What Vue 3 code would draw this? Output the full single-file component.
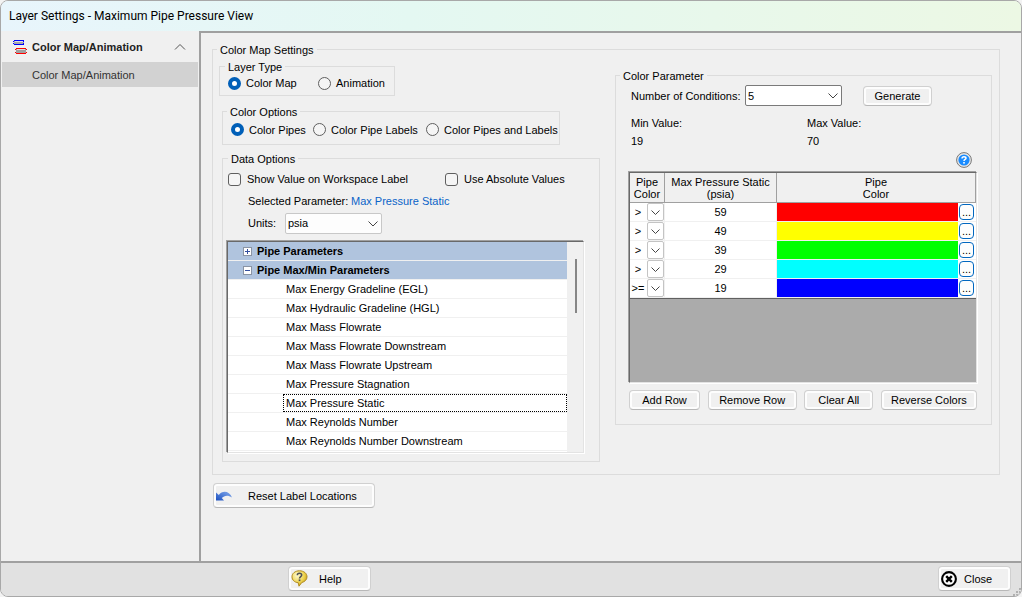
<script setup>
import { ref } from 'vue'

const layerType = ref('map')
const colorOption = ref('pipes')
const showValue = ref(false)
const absolute = ref(false)
const units = ref('psia')
const conditions = ref('5')
const selected = ref('Max Pressure Static')

const colorOptions = [
  { id: 'pipes', label: 'Color Pipes' },
  { id: 'labels', label: 'Color Pipe Labels' },
  { id: 'both', label: 'Color Pipes and Labels' }
]

const parameters = [
  'Max Energy Gradeline (EGL)',
  'Max Hydraulic Gradeline (HGL)',
  'Max Mass Flowrate',
  'Max Mass Flowrate Downstream',
  'Max Mass Flowrate Upstream',
  'Max Pressure Stagnation',
  'Max Pressure Static',
  'Max Reynolds Number',
  'Max Reynolds Number Downstream'
]

const rows = ref([
  { op: '>', value: 59, color: 'red' },
  { op: '>', value: 49, color: 'yellow' },
  { op: '>', value: 39, color: 'lime' },
  { op: '>', value: 29, color: 'cyan' },
  { op: '>=', value: 19, color: 'blue' }
])
</script>

<template>
  <div class="window">
    <header class="titlebar">Layer Settings - Maximum Pipe Pressure View</header>

    <div class="body">
      <nav class="sidebar">
        <button class="nav-head" type="button">
          <svg class="nav-icon" width="14" height="14" viewBox="0 0 14 14" shape-rendering="crispEdges">
            <rect x="1" y="1" width="10" height="3" fill="#a8a8a8" />
            <path d="M2 1.500h8" stroke="#e0e0e0" />
            <path d="M1 .5h10M1 4.500h10M0 1.500h1M10 1.500h1M0 3.500h1M10 3.500h1" stroke="#00f" />
            <rect x="3" y="9" width="10" height="4" fill="#a0a0a0" />
            <path d="M4 9.500h8" stroke="#e0e0e0" />
            <path d="M3 8.500h10M3 13.500h10M2 9.500h1M13 9.500h1M2 12.500h1M13 12.500h1" stroke="#f00" />
          </svg>
          <span class="nav-title">Color Map/Animation</span>
          <svg width="12" height="8" viewBox="0 0 12 8"><path d="M1 6.500l5-5 5 5" fill="none" stroke="#555" /></svg>
        </button>
        <a class="nav-item" href="#">Color Map/Animation</a>
      </nav>

      <main class="content">
        <fieldset class="group settings">
          <legend>Color Map Settings</legend>
          <div class="columns">
            <div class="left">
              <fieldset class="group layer-type">
                <legend>Layer Type</legend>
                <div class="choices">
                  <label><input v-model="layerType" type="radio" name="layer" value="map" />Color Map</label>
                  <label><input v-model="layerType" type="radio" name="layer" value="animation" />Animation</label>
                </div>
              </fieldset>

              <fieldset class="group color-options">
                <legend>Color Options</legend>
                <div class="choices">
                  <label v-for="o in colorOptions" :key="o.id">
                    <input v-model="colorOption" type="radio" name="option" :value="o.id" />{{ o.label }}
                  </label>
                </div>
              </fieldset>

              <fieldset class="group data-options">
                <legend>Data Options</legend>
                <div class="checks">
                  <label><input v-model="showValue" type="checkbox" />Show Value on Workspace Label</label>
                  <label><input v-model="absolute" type="checkbox" />Use Absolute Values</label>
                </div>
                <div class="line">
                  <span class="caption">Selected Parameter:</span>
                  <span class="chosen">{{ selected }}</span>
                </div>
                <div class="line">
                  <label class="units-label" for="units">Units:</label>
                  <span class="combo units">
                    <select id="units" v-model="units"><option>psia</option></select>
                    <svg width="10" height="6" viewBox="0 0 10 6"><path d="M.5 .5L5 5 9.500 .5" /></svg>
                  </span>
                </div>
                <div class="sunken tree">
                  <ul class="tree-rows">
                    <li class="category">
                      <button type="button" aria-label="Expand"><svg width="9" height="9" viewBox="0 0 9 9"><path d="M2 4.500h5M4.500 2v5" /></svg></button>
                      Pipe Parameters
                    </li>
                    <li class="category">
                      <button type="button" aria-label="Collapse"><svg width="9" height="9" viewBox="0 0 9 9"><path d="M2 4.500h5" /></svg></button>
                      Pipe Max/Min Parameters
                    </li>
                    <li v-for="p in parameters" :key="p" class="param" @click="selected = p">
                      <span :class="{ focused: p === selected }">{{ p }}</span>
                    </li>
                  </ul>
                  <div class="scrollbar"><div class="thumb"></div></div>
                </div>
              </fieldset>
            </div>

            <fieldset class="group color-parameter">
              <legend>Color Parameter</legend>
              <div class="conditions">
                <label for="conditions">Number of Conditions:</label>
                <span class="combo strong">
                  <select id="conditions" v-model="conditions"><option>5</option></select>
                  <svg width="10" height="6" viewBox="0 0 10 6"><path d="M.5 .5L5 5 9.500 .5" /></svg>
                </span>
                <button class="btn generate" type="button">Generate</button>
              </div>
              <dl class="range">
                <div><dt>Min Value:</dt><dd>19</dd></div>
                <div><dt>Max Value:</dt><dd>70</dd></div>
              </dl>
              <div class="hint">
                <button type="button" aria-label="Help on colors">
                  <svg width="16" height="16" viewBox="0 0 16 16">
                    <circle cx="8" cy="8" r="7.400" fill="#e8e8e8" stroke="#777" />
                    <circle cx="8" cy="8" r="5.600" fill="#1a8cff" />
                    <path d="M6 6.500q0-1.800 2-1.800t2 1.600c0 1.200-2 1.200-2 2.600" fill="none" stroke="#fff" stroke-width="1.500" />
                    <rect x="7.200" y="10" width="1.600" height="1.600" fill="#fff" />
                  </svg>
                </button>
              </div>
              <div class="sunken grid">
                <table>
                  <colgroup><col class="c-op" /><col class="c-value" /><col /></colgroup>
                  <thead>
                    <tr><th>Pipe<br />Color</th><th>Max Pressure Static<br />(psia)</th><th>Pipe<br />Color</th></tr>
                  </thead>
                  <tbody>
                    <tr v-for="r in rows" :key="r.value">
                      <td>
                        <span class="op">
                          <select v-model="r.op" :aria-label="'Comparison for ' + r.value"><option>&gt;</option><option>&gt;=</option></select>
                          <span class="op-arrow"><svg width="9" height="5" viewBox="0 0 9 5"><path d="M.5 .5l4 4 4-4" /></svg></span>
                        </span>
                      </td>
                      <td class="num">{{ r.value }}</td>
                      <td>
                        <div class="swatch-cell">
                          <span class="swatch" :class="r.color"></span>
                          <button type="button" class="more" :aria-label="'Pick color for ' + r.value">...</button>
                        </div>
                      </td>
                    </tr>
                  </tbody>
                </table>
              </div>
              <div class="actions">
                <button class="btn add" type="button">Add Row</button>
                <button class="btn remove" type="button">Remove Row</button>
                <button class="btn clear" type="button">Clear All</button>
                <button class="btn reverse" type="button">Reverse Colors</button>
              </div>
            </fieldset>
          </div>
        </fieldset>

        <button class="btn tall reset" type="button">
          <svg width="17" height="12" viewBox="0 0 17 12">
            <defs><linearGradient id="undo" x1="0" y1="1" x2="1" y2="0"><stop offset="0" stop-color="#1b50c0" /><stop offset="1" stop-color="#84abed" /></linearGradient></defs>
            <path d="M0 2.500v8h8L5.800 8C8 5.500 12 4.500 16 7.500 13.500 1 6.500 0 2.800 5z" fill="url(#undo)" />
          </svg>
          <span>Reset Label Locations</span>
        </button>
      </main>
    </div>

    <footer class="footer">
      <button class="btn tall help" type="button">
        <svg width="17" height="17" viewBox="0 0 17 17">
          <defs><radialGradient id="bubble" cx=".35" cy=".3" r=".8"><stop offset="0" stop-color="#fffbd0" /><stop offset=".6" stop-color="#ecd14a" /><stop offset="1" stop-color="#b8870c" /></radialGradient></defs>
          <path d="M8.500 .8c4.400 0 7.500 2.600 7.500 6 0 3-2.300 5-5.200 5.700L8 16.200l-.8-3.500C3.500 12.400 1 10 1 6.800 1 3.400 4.100 .8 8.500 .8z" fill="url(#bubble)" stroke="#b18b20" />
          <path d="M6.300 5.300q0-2 2.200-2t2.200 1.800c0 1.500-2.200 1.500-2.200 3.400" fill="none" stroke="#4c5058" stroke-width="1.500" />
          <rect x="7.700" y="9.400" width="1.700" height="1.700" fill="#4c5058" />
        </svg>
        <span>Help</span>
      </button>
      <button class="btn tall close" type="button">
        <svg width="16" height="16" viewBox="0 0 16 16">
          <circle cx="8" cy="8" r="6.900" fill="#fff" stroke="#000" stroke-width="2.100" />
          <path d="M5.200 5.200l5.600 5.600M10.800 5.200l-5.600 5.600" stroke="#000" stroke-width="2.400" />
        </svg>
        <span>Close</span>
      </button>
      <svg class="grip" width="8" height="8" viewBox="0 0 8 8" fill="#b0b0b0"><path d="M6 0h2v2H6zM3 3h2v2H3zM6 3h2v2H6zM0 6h2v2H0zM3 6h2v2H3zM6 6h2v2H6z" /></svg>
    </footer>
  </div>
</template>

<style>
body { background: #f3f3f3; }
</style>

<style scoped>
.window, .window * { box-sizing: border-box; }
.window {
  display: flex;
  flex-direction: column;
  min-height: 100vh;
  border: 1px solid #a8a8a8;
  border-radius: 8px;
  overflow: hidden;
  background: #f0f0f0;
  font: 11px/14px "Liberation Sans", Arial, sans-serif;
  color: #000;
}
.window button, .window select { font: inherit; color: inherit; }
.window svg { display: block; flex: none; }
.window a { color: inherit; text-decoration: none; }

.titlebar {
  height: 30px;
  padding: 0 8px;
  font-family: Roboto, "Liberation Sans", sans-serif;
  font-size: 12px;
  line-height: 30px;
  background: linear-gradient(90deg, #e8f5fc, #e4f8f2 40%, #ecf8e4);
}
.body { display: flex; flex: 1; }
.sidebar { width: 198px; flex: none; padding: 0 1px; }
.nav-head {
  display: flex;
  align-items: center;
  width: 100%;
  height: 31px;
  padding: 0 12px 0 11px;
  border: 0;
  background: none;
  text-align: left;
}
.window .nav-head { font-weight: bold; color: #222; }
.nav-title { flex: 1; padding-left: 5px; white-space: nowrap; }
.nav-item { display: block; height: 25px; padding-left: 30px; line-height: 26px; background: #d2d2d2; }
.window .nav-item { color: #333; }

.content {
  flex: 1;
  min-width: 0;
  padding: 9px 21px 20px 11px;
  border-left: 2px solid #a0a0a0;
  border-top: 2px solid #a0a0a0;
}
.group { margin: 0; padding: 0; min-width: 0; border: 1px solid #dcdcdc; }
.group legend { padding: 0 3px; height: 15px; line-height: 16px; }
.settings { padding: 2px 7px 12px 6px; }
.settings > legend { margin-left: -2px; }
.columns { display: grid; grid-template-columns: 381fr 377fr; gap: 15px; align-items: start; }
.left { display: flex; flex-direction: column; }

.layer-type { width: 176px; height: 37px; }
.layer-type legend { margin-left: 5px; }
.color-options { width: 338px; height: 41px; margin: 8px 0 0 3px; }
.color-options legend { margin-left: 4px; }
.data-options { margin: 6px 0 0 3px; padding: 2px 14px 7px 3px; }
.data-options legend { margin-left: 2px; }
.choices { display: grid; grid-template-columns: 90px auto; justify-content: start; padding-left: 8px; height: 18px; }
.color-options .choices { grid-template-columns: 82px 113px auto; height: 21px; }
.choices label, .checks label { display: flex; align-items: center; gap: 5px; white-space: nowrap; }
.checks label { gap: 6px; }
input { appearance: none; width: 13px; height: 13px; margin: 0; flex: none; border: 1px solid #5f5f5f; background: #f5f5f5; }
input[type="radio"] { border-radius: 50%; }
input[type="radio"]:checked { border: 4px solid #005fb8; background: #fff; }
input[type="checkbox"] { border-radius: 3px; }
.checks { display: grid; grid-template-columns: 217px auto; justify-content: start; height: 22px; padding-left: 2px; }
.line { display: flex; align-items: center; height: 22px; padding-left: 22px; gap: 8px; white-space: nowrap; }
.caption { width: 95px; }
.units-label { width: 29px; }
.chosen { color: #0a64c8; }

.combo { position: relative; display: block; width: 97px; height: 21px; }
.combo select {
  appearance: none;
  width: 100%;
  height: 100%;
  padding: 0 20px 0 2px;
  border: 1px solid #c8c8c8;
  border-radius: 2px;
  background: #fdfdfd;
}
.combo.strong select { border-color: #7a7a7a; background: #fff; }
.combo svg { position: absolute; right: 4px; top: 8px; pointer-events: none; }
.combo path, .op-arrow path { fill: none; stroke: #444; }

.sunken {
  border: 1px solid;
  border-color: #696969 #e3e3e3 #e3e3e3 #696969;
  box-shadow: -1px -1px 0 #a0a0a0, 1px 1px 0 #fff;
}
.tree {
  display: flex;
  height: 212px;
  margin: 7px 1px 1px;
  background: #f0f0f0;
}
.tree-rows { flex: 1; margin: 0; padding: 0; list-style: none; overflow: hidden; background: #fff; }
.tree-rows li { display: flex; height: 19px; align-items: center; border-bottom: 1px solid #f0f0f0; }
.category { padding-left: 15px; gap: 5px; background: #b0c4de; font-weight: bold; }
.category button { padding: 0; width: 9px; height: 9px; border: 0; background: #fff; outline: 1px solid #8a94a4; outline-offset: -1px; }
.category path { stroke: #334f9e; }
.param { padding-left: 55px; }
.param span { flex: 1; height: 18px; padding-left: 2px; border: 1px solid transparent; line-height: 16px; }
.param .focused { border: 1px dotted #000; }
.scrollbar { width: 16px; padding: 17px 0 0 8px; }
.thumb { width: 2px; height: 54px; background: #868686; }

.color-parameter { margin-top: 9px; padding: 2px 13px 14px 12px; }
.color-parameter legend { margin-left: -8px; }
.conditions { display: flex; align-items: center; height: 21px; padding-left: 3px; white-space: nowrap; }
.conditions label { width: 114px; }
.generate { margin-left: 21px; }
.range { display: grid; grid-template-columns: 176px 1fr; margin: 8px 0 2px 3px; line-height: 18px; }
.range dd { margin: 0; }
.hint { display: flex; justify-content: flex-end; padding-right: 6px; }
.hint button { padding: 0; border: 0; background: none; }
.grid {
  height: 211px;
  margin: 4px 1px 1px;
  background: #ababab;
}
table { width: 100%; table-layout: fixed; border-collapse: separate; border-spacing: 0; border-bottom: 1px solid #606060; }
.c-op { width: 35px; }
.c-value { width: 112px; }
th { height: 30px; padding: 0; border: solid #a0a0a0; border-width: 0 1px 1px 0; background: #f0f0f0; font-weight: normal; line-height: 12px; }
td { height: 19px; padding: 0; border: solid #f0f0f0; border-width: 0 1px 1px 0; background: #fff; }
td:last-child { border-right: 0; }
.num { text-align: center; line-height: 18px; }
.op { position: relative; display: block; height: 18px; }
.op select { appearance: none; width: 100%; height: 18px; padding: 0 18px 0 0; border: 0; background: none; text-align: center; }
.op-arrow {
  position: absolute;
  top: 0;
  right: 0;
  display: grid;
  place-items: center;
  width: 17px;
  height: 18px;
  border: 1px solid #c4c4c4;
  border-radius: 2px;
  pointer-events: none;
}
.swatch-cell { display: flex; height: 18px; align-items: center; gap: 1px; padding-right: 2px; }
.swatch { flex: 1; height: 18px; }
.red { background: #f00; }
.yellow { background: #ff0; }
.lime { background: #0f0; }
.cyan { background: #0ff; }
.blue { background: #00f; }
.more { width: 15px; height: 16px; padding: 0; border: 1px solid #0067c0; border-radius: 4px; background: #fdfdfd; line-height: 14px; }
.actions { display: flex; justify-content: space-between; margin-top: 7px; padding: 0 1px; }

.btn {
  height: 20px;
  padding: 0;
  border: 1px solid #d0d0d0;
  border-bottom-color: #b8b8b8;
  border-radius: 4px;
  background: #f0f0f0;
  box-shadow: inset 0 0 0 2px #fdfdfd;
  white-space: nowrap;
}
.generate { width: 69px; }
.add { width: 71px; }
.remove { width: 89px; }
.clear { width: 69px; }
.reverse { width: 96px; }
.btn.tall { display: flex; align-items: center; height: 25px; padding-left: 2px; }
.reset { width: 162px; margin: 8px 0 0 1px; gap: 15px; }
.help { width: 83px; margin-left: 287px; gap: 11px; }
.close { width: 73px; margin-left: auto; gap: 7px; }
.footer {
  position: relative;
  display: flex;
  height: 35px;
  padding: 3px 10px 0 0;
  border-top: 2px solid #a0a0a0;
  background: #e1e1e1;
}
.grip { position: absolute; right: 0; bottom: 0; }
</style>
